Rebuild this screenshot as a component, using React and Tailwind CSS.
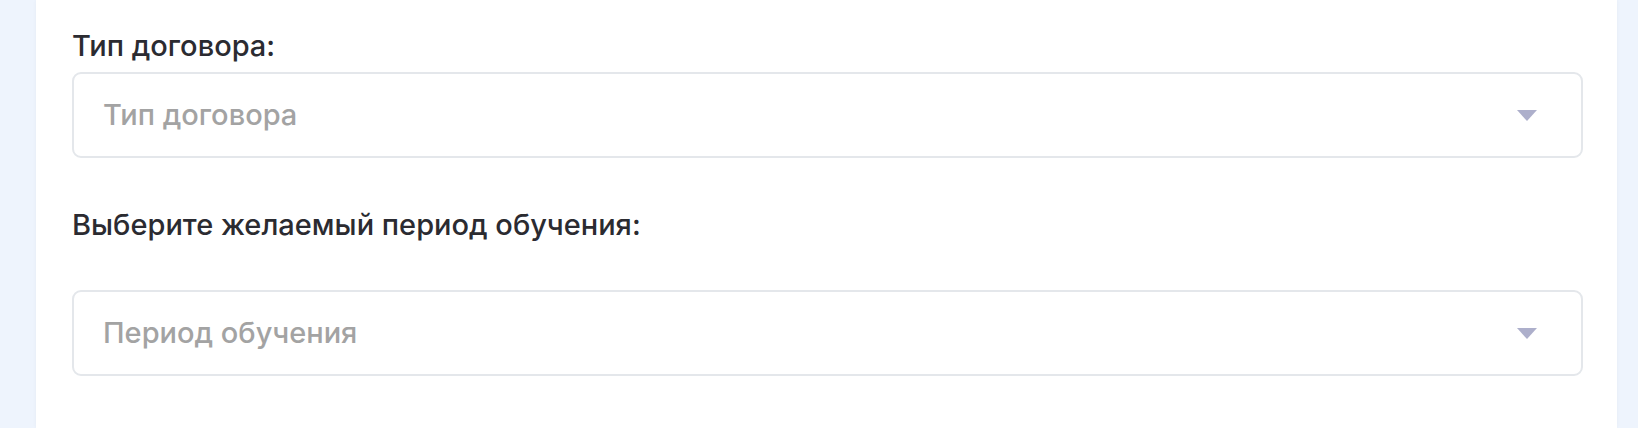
import React from "react";

function Select({ placeholder }) {
  return (
    <div className="flex h-[86px] w-full items-center justify-between rounded-[9px] border-2 border-[#e4e7eb] bg-white pl-[29px] pr-[44px]">
      <span className="text-[29px] font-medium leading-[34px] text-[#a3a3a3]">{placeholder}</span>
      <svg width="20" height="11" viewBox="0 0 20 11" className="shrink-0">
        <path d="M0 0 H20 L10 11 Z" fill="#adafcb" />
      </svg>
    </div>
  );
}

export default function App() {
  return (
    <div
      className="flex h-[428px] w-full bg-[#eef4fd] pl-[36px] pr-[21px]"
      style={{ fontFamily: "Inter, 'Noto Sans', sans-serif" }}
    >
      <div className="flex flex-1 flex-col bg-white pl-[36px] pr-[34px] pt-[28px] shadow-[0_0_4px_rgba(0,0,0,0.04)]">
        <label className="text-[29px] font-medium leading-[36px] text-[#2b2b31]">Тип договора:</label>
        <div className="mt-[8px]">
          <Select placeholder="Тип договора" />
        </div>
        <label className="mt-[49px] text-[29px] font-medium leading-[36px] text-[#2b2b31]">
          Выберите желаемый период обучения:
        </label>
        <div className="mt-[47px]">
          <Select placeholder="Период обучения" />
        </div>
      </div>
    </div>
  );
}
